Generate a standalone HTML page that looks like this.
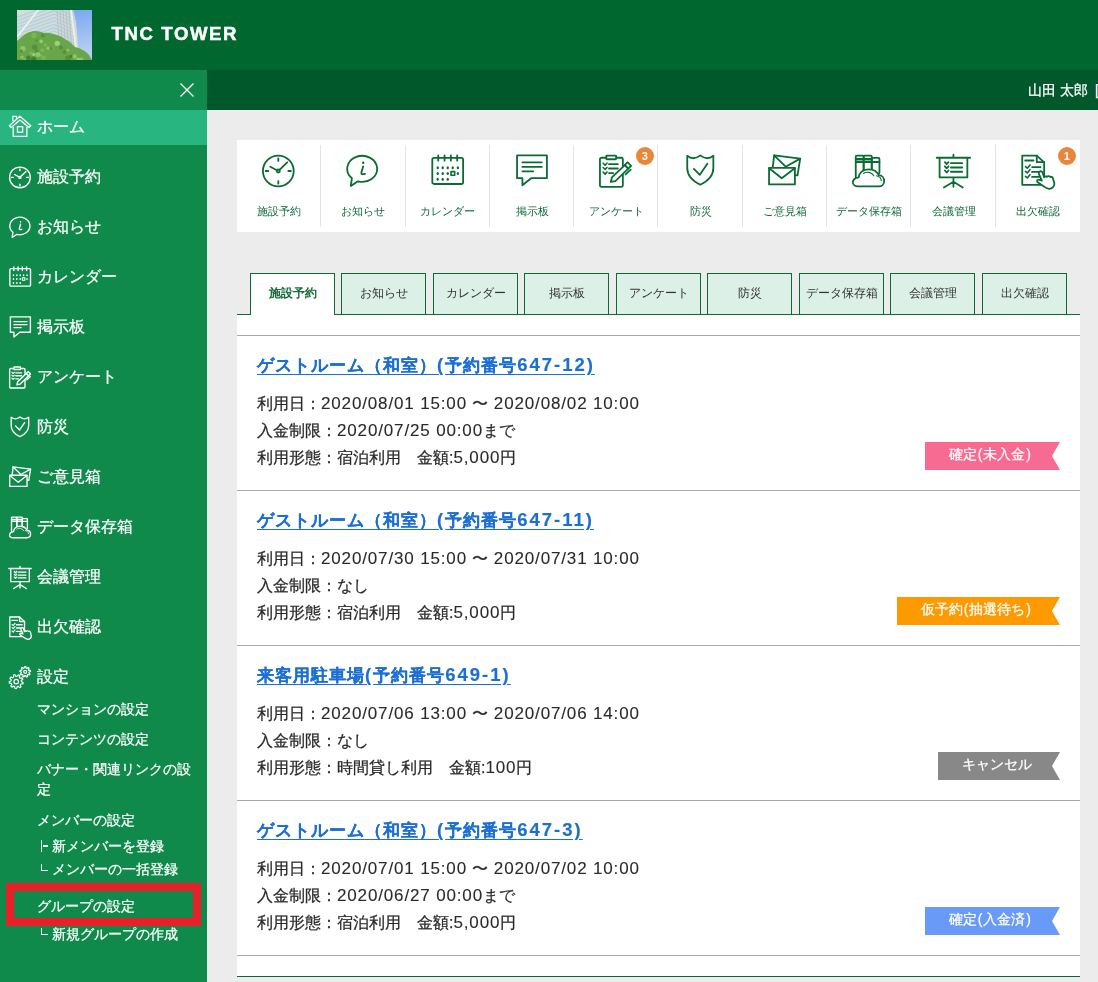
<!DOCTYPE html>
<html lang="ja"><head><meta charset="utf-8"><style>
*{margin:0;padding:0;box-sizing:border-box}
html,body{width:1098px;height:982px;overflow:hidden;background:#ececec;font-family:"Liberation Sans",sans-serif}
#wrap{position:absolute;left:0;top:0;width:1098px;height:982px;will-change:transform}
.mi,.si,.det,.rib,#user{-webkit-text-stroke:0.25px currentColor}
.ttl{-webkit-text-stroke:0.15px currentColor}
.abs{position:absolute}
#hdr{left:0;top:0;width:1098px;height:70px;background:#00672f}
#brand{left:111.5px;top:22px;color:#fff;font-weight:bold;font-size:18.6px;letter-spacing:1.6px;line-height:24px;-webkit-text-stroke:0.5px #fff}
#side{left:0;top:70px;width:207px;height:912px;background:#0f8a4a}
#topbar{left:207px;top:70px;width:891px;height:40px;background:#00582b}
#user{left:1028px;top:80px;color:#fff;font-size:14px;line-height:20px;white-space:nowrap}
#homehl{left:0;top:110px;width:207px;height:35px;background:#29b57f}
.mi{position:absolute;left:37px;color:#fff;font-size:16px;line-height:20px;white-space:nowrap}
.sic{position:absolute;left:9px;width:22.8px;height:22.8px;overflow:visible;color:#fff;fill:none;stroke:#fff;stroke-width:2;stroke-linecap:round;stroke-linejoin:round;--bg:#0f8a4a}
.tr{position:absolute;left:40.9px;width:1.8px;border-left:1.8px solid #fff}
.trh{position:absolute;left:42.7px;width:5px;height:1.8px;background:#fff}
.si{position:absolute;left:37px;color:#fff;font-size:14px;line-height:18px;white-space:nowrap}
#panel{left:237px;top:140px;width:843px;height:92px;background:#fff}
.pic{position:absolute;width:34px;height:34px;overflow:visible;color:#0b6b34;fill:none;stroke:#0b6b34;stroke-width:1.8;stroke-linecap:round;stroke-linejoin:round;--bg:#fff}
.plb{position:absolute;top:204px;width:100px;text-align:center;font-size:11px;line-height:15px;color:#106a36;white-space:nowrap}
.pdiv{position:absolute;top:145px;width:1px;height:82px;background:#e3e3e3}
.badge{position:absolute;width:18px;height:18px;border-radius:9px;background:#e8873a;color:#fff;font-size:11px;font-weight:bold;text-align:center;line-height:18px}
#list{left:237px;top:315px;width:843px;height:662px;background:#fff;border-bottom:1px solid #066a33}
#tabline{left:237px;top:314px;width:843px;height:1px;background:#0b6b34}
.tab{position:absolute;top:273px;width:85px;height:42px;background:#ddf0e7;border:1px solid #0b6b34;font-size:12px;color:#333;text-align:center;line-height:38px;white-space:nowrap}
.tab.on{background:#fff;border-bottom:none;color:#1a6b3b;font-weight:bold}
.sep{position:absolute;left:237px;width:843px;height:1px;background:#aaa}
.ttl{position:absolute;left:257px;color:#1d6fd2;font-size:17px;letter-spacing:1px;font-weight:bold;text-decoration:underline;line-height:22px;white-space:nowrap}
.det{position:absolute;left:257px;color:#2a2a2a;font-size:16px;line-height:27px;white-space:nowrap}
.det .n{font-size:17px;letter-spacing:0.85px;-webkit-text-stroke:0.1px currentColor}
.det .t{margin:0 1px}
.ttl .n{letter-spacing:2px;font-size:18.5px}
.ttl{text-underline-offset:3px}
.rib .p{margin:0 1px}
.rib{position:absolute;right:38px;height:28px;color:#fff;font-size:14px;line-height:25px;white-space:nowrap;padding-left:24px;padding-right:28px;clip-path:polygon(0 0,100% 0,calc(100% - 8px) 50%,100% 100%,0 100%)}
</style></head><body><div id="wrap">
<svg width="0" height="0" style="position:absolute"><symbol id="i-clock" viewBox="0 0 34 34" overflow="visible"><circle cx="16.3" cy="17" r="15.4"/>
<path d="M16.3 4.3v2.6M16.3 27.1v2.6M3.7 17h2.6M26.3 17h2.6" />
<circle cx="16.3" cy="17" r="1.5"/>
<path d="M14.9 16.2L8.3 12.7M17.5 15.8L25.2 8.3"/></symbol><symbol id="i-info" viewBox="0 0 34 34" overflow="visible"><path d="M5.9 24.3A15 13 0 1 1 11.9 27.3L4.8 32Z"/>
<circle cx="17.2" cy="8.7" r="1.2" fill="currentColor" stroke="none"/>
<path d="M17.2 12.3L15.4 18.6C15 20.2 16.2 20.6 19 19.8"/></symbol><symbol id="i-cal" viewBox="0 0 34 34" overflow="visible"><rect x="1.3" y="3.9" width="30.8" height="26.1" rx="1.8"/>
<path d="M7.25 1.3v5.4M13.55 1.3v5.4M19.85 1.3v5.4M26.2 1.3v5.4"/>
<ellipse cx="6.7" cy="13.75" rx="1.15" ry="1.5" fill="currentColor" stroke="none"/><ellipse cx="11.7" cy="13.75" rx="1.15" ry="1.5" fill="currentColor" stroke="none"/><ellipse cx="16.75" cy="13.75" rx="1.15" ry="1.5" fill="currentColor" stroke="none"/><ellipse cx="21.75" cy="13.75" rx="1.15" ry="1.5" fill="currentColor" stroke="none"/><ellipse cx="26.85" cy="13.75" rx="1.15" ry="1.5" fill="currentColor" stroke="none"/><ellipse cx="6.7" cy="19.45" rx="1.15" ry="1.5" fill="currentColor" stroke="none"/><ellipse cx="11.7" cy="19.45" rx="1.15" ry="1.5" fill="currentColor" stroke="none"/><ellipse cx="16.75" cy="19.45" rx="1.15" ry="1.5" fill="currentColor" stroke="none"/><ellipse cx="26.85" cy="19.45" rx="1.15" ry="1.5" fill="currentColor" stroke="none"/><ellipse cx="6.7" cy="25.2" rx="1.15" ry="1.5" fill="currentColor" stroke="none"/><ellipse cx="11.7" cy="25.2" rx="1.15" ry="1.5" fill="currentColor" stroke="none"/><ellipse cx="16.75" cy="25.2" rx="1.15" ry="1.5" fill="currentColor" stroke="none"/><rect x="20" y="17.6" width="3.7" height="3.7" style="stroke-width:1.6"/></symbol><symbol id="i-board" viewBox="0 0 34 34" overflow="visible"><path d="M2.05 1.4H31.9V24.2H16.15L7.4 31.3V24.2H2.05Z"/>
<path d="M7.4 8.35H26.8M7.4 12.9H26.8M7.4 17.3H18.2"/></symbol><symbol id="i-survey" viewBox="0 0 34 34" overflow="visible"><rect x="0.95" y="3.75" width="22.9" height="29.1" rx="1.5"/>
<rect x="7.3" y="1.55" width="9.8" height="3.7" rx="0.5" fill="var(--bg)"/>
<path d="M4.2 9.2L6.1 11.2L8 9.2" style="stroke-width:1.6"/><path d="M4.2 13.5L6.1 15.5L8 13.5" style="stroke-width:1.6"/><path d="M4.2 18.1L6.1 20.1L8 18.1" style="stroke-width:1.6"/><path d="M10 10.2H18.8M10 14.5H18.8M10 19.1H14.2"/>
<g transform="translate(11.4 28.4) rotate(-44)"><path d="M0.6 0L4.5 -2.5H22.4V2.5H4.5Z" fill="var(--bg)"/><path d="M22.4 -2.5H26.4V2.5H22.4Z" fill="var(--bg)"/><path d="M16.5 4.9H23.5"/></g></symbol><symbol id="i-shield" viewBox="0 0 34 34" overflow="visible"><path d="M3.25 1.8Q9.5 6.8 16.3 1.4Q23.1 6.8 29.35 1.8V14C29.35 22 23 27.5 16.3 30.7C9.6 27.5 3.25 22 3.25 14Z"/>
<path d="M9.9 14.85L15.85 20.8L23.35 9.7"/></symbol><symbol id="i-mail" viewBox="0 0 34 34" overflow="visible"><path d="M4.7 13.6L6.15 1.4L32.2 4.6L29.5 21.4L26.9 21.1"/>
<path d="M6.15 1.4L17.7 12.7L32.2 4.6"/>
<rect x="1.05" y="13.8" width="25.85" height="16.66" fill="var(--bg)"/>
<path d="M1.2 14.2L13.75 24.2L26.8 14.2"/></symbol><symbol id="i-cloud" viewBox="0 0 34 34" overflow="visible"><rect x="3.75" y="1.6" width="7.9" height="27" rx="1"/>
<rect x="11.65" y="1.6" width="8.1" height="18" rx="1"/>
<rect x="19.75" y="3.95" width="7.7" height="15.6" rx="1"/>
<rect x="3.75" y="5" width="16" height="3" fill="currentColor" stroke="none" opacity="0.45"/>
<path d="M3.75 5H19.75M3.75 8H27.45"/>
<path d="M6 32.4H26.8C30 32.4 32.2 30 32.2 27C32.2 24 30 21.4 26.8 21.2C25.2 17.6 21.2 15.3 16.3 15.3C10.8 15.3 7.2 19 6.7 23.3C3 24 0.8 26.2 0.8 28.2C0.8 30.8 3.2 32.4 6 32.4Z" fill="var(--bg)"/>
<path d="M11.5 19.5C14 17.5 19.5 17.8 21.8 21.8M24.3 21.8C27 22.3 29 24 29.3 26.6" style="stroke-width:1.1"/></symbol><symbol id="i-pres" viewBox="0 0 34 34" overflow="visible"><path d="M-0.3 3.75H33.1M16.45 0.7V3.75M2.6 3.75V23.4H30.35V3.75M16.45 23.4V32.8M16.45 27.7L6.9 33.6M16.45 27.7L25.8 33.6"/>
<path d="M7.9 8.2L9.7 10.2L11.5 8.2" style="stroke-width:1.8"/><path d="M7.9 12.3L9.7 14.3L11.5 12.3" style="stroke-width:1.8"/><path d="M7.9 16.5L9.7 18.5L11.5 16.5" style="stroke-width:1.8"/><path d="M13.9 9.2H25.2M13.9 13.5H25.2M13.9 17.75H25.2"/></symbol><symbol id="i-attend" viewBox="0 0 34 34" overflow="visible"><path d="M1.25 1.55H15.75L23.15 8.36V30.86H1.25Z"/>
<path d="M15.75 1.55V8.2H23.15"/>
<path d="M4.2 6.5H12.5"/><path d="M4.5 12.6L6.3 14.2L9 10.9" style="stroke-width:1.6"/><path d="M4.5 17.3L6.3 18.900000000000002L9 15.600000000000001" style="stroke-width:1.6"/><path d="M4.5 22.4L6.3 24.0L9 20.7" style="stroke-width:1.6"/><path d="M11.05 13.1H19.6M11.05 17.95H19.6M11.05 22.9H19.6"/>
<path d="M18.6 17.8C19.8 16.8 21.2 17.3 21.6 18.6L23 23.3C23.5 22.2 25 22 25.8 22.8C26.5 22 28.5 22 29.5 23C30.5 22.5 31.5 23 31.8 24L33.3 29C34 32 31 35 28 34.8C26 34.7 24.5 33.5 23 32.5L17.4 28.8C15 27.5 16 25 18.5 25.8L20.8 26.6L17.8 19.7C17.6 19 17.9 18.3 18.6 17.8Z" fill="var(--bg)"/></symbol></svg>
<div id="hdr" class="abs"></div>
<svg class="abs" style="left:17px;top:10px;width:75px;height:50px" viewBox="0 0 75 50">
<defs><linearGradient id="sky" x1="0" y1="0" x2="0.3" y2="1"><stop offset="0" stop-color="#6a9ff2"/><stop offset="1" stop-color="#b4cdf2"/></linearGradient>
<clipPath id="bc"><path d="M0 0H56L59 12L62 46H0Z"/></clipPath><clipPath id="pc"><rect width="75" height="50"/></clipPath></defs>
<g clip-path="url(#pc)">
<rect width="75" height="50" fill="url(#sky)"/>
<path d="M0 0H56L59 12L62 46H0Z" fill="#d9dad5"/>
<g clip-path="url(#bc)"><path d="M-2 8.0L37 -6.0L58 3.0" stroke="#a9d3e8" stroke-width="1.3" fill="none"/><path d="M-2 11.4L37 -2.6L58 6.4" stroke="#a9d3e8" stroke-width="1.3" fill="none"/><path d="M-2 14.8L37 0.8L58 9.8" stroke="#a9d3e8" stroke-width="1.3" fill="none"/><path d="M-2 18.2L37 4.2L58 13.2" stroke="#a9d3e8" stroke-width="1.3" fill="none"/><path d="M-2 21.6L37 7.6L58 16.6" stroke="#a9d3e8" stroke-width="1.3" fill="none"/><path d="M-2 25.0L37 11.0L58 20.0" stroke="#a9d3e8" stroke-width="1.3" fill="none"/><path d="M-2 28.4L37 14.4L58 23.4" stroke="#a9d3e8" stroke-width="1.3" fill="none"/><path d="M-2 31.8L37 17.8L58 26.8" stroke="#a9d3e8" stroke-width="1.3" fill="none"/><path d="M-2 35.2L37 21.2L58 30.2" stroke="#a9d3e8" stroke-width="1.3" fill="none"/><path d="M-2 38.6L37 24.6L58 33.6" stroke="#a9d3e8" stroke-width="1.3" fill="none"/><path d="M-2 42.0L37 28.0L58 37.0" stroke="#a9d3e8" stroke-width="1.3" fill="none"/><path d="M-2 45.4L37 31.4L58 40.4" stroke="#a9d3e8" stroke-width="1.3" fill="none"/><path d="M-2 48.8L37 34.8L58 43.8" stroke="#a9d3e8" stroke-width="1.3" fill="none"/><path d="M-2 52.2L37 38.2L58 47.2" stroke="#a9d3e8" stroke-width="1.3" fill="none"/><path d="M-2 55.6L37 41.6L58 50.6" stroke="#a9d3e8" stroke-width="1.3" fill="none"/><path d="M-2 59.0L37 45.0L58 54.0" stroke="#a9d3e8" stroke-width="1.3" fill="none"/><path d="M40 0L43 46" stroke="#b7bab4" stroke-width="0.8"/><path d="M43 0L46 46" stroke="#b7bab4" stroke-width="0.8"/><path d="M46 0L49 46" stroke="#b7bab4" stroke-width="0.8"/><path d="M49 0L52 46" stroke="#b7bab4" stroke-width="0.8"/><path d="M52 0L55 46" stroke="#b7bab4" stroke-width="0.8"/><path d="M55 0L58 46" stroke="#b7bab4" stroke-width="0.8"/><path d="M0 27L22 -1" stroke="#f6f6f2" stroke-width="1.4"/><path d="M54 0L60 46" stroke="#eeeeea" stroke-width="2"/></g>
<path d="M0 31C4 28 8 23 13 22C17 20 23 21 27 23C31 22 36 24 40 25C44 26 47 28 49 30C53 31 56 35 58 37C63 38 69 41 72 45L75 50H0Z" fill="#68a64a"/>
<circle cx="17.8" cy="37.2" r="2.7" fill="#4f8c36" opacity="0.8"/><circle cx="35.6" cy="38.3" r="1.2" fill="#7fba58" opacity="0.8"/><circle cx="17.6" cy="49.9" r="2.1" fill="#3f7a2c" opacity="0.8"/><circle cx="41.2" cy="33.1" r="1.6" fill="#a6d47a" opacity="0.8"/><circle cx="11.4" cy="47.9" r="2.4" fill="#3f7a2c" opacity="0.8"/><circle cx="53.9" cy="46.6" r="1.8" fill="#3f7a2c" opacity="0.8"/><circle cx="16.3" cy="49.0" r="2.4" fill="#3f7a2c" opacity="0.8"/><circle cx="40.1" cy="33.4" r="2.6" fill="#a6d47a" opacity="0.8"/><circle cx="51.1" cy="48.0" r="2.8" fill="#4f8c36" opacity="0.8"/><circle cx="64.5" cy="49.0" r="2.1" fill="#7fba58" opacity="0.8"/><circle cx="64.0" cy="49.7" r="1.8" fill="#9ccc6e" opacity="0.8"/><circle cx="5.0" cy="47.1" r="1.7" fill="#9ccc6e" opacity="0.8"/><circle cx="57.7" cy="46.4" r="2.2" fill="#9ccc6e" opacity="0.8"/><circle cx="44.0" cy="37.4" r="2.0" fill="#4f8c36" opacity="0.8"/><circle cx="5.8" cy="38.8" r="2.7" fill="#9ccc6e" opacity="0.8"/><circle cx="19.8" cy="41.3" r="1.7" fill="#4f8c36" opacity="0.8"/><circle cx="28.3" cy="34.9" r="1.8" fill="#7fba58" opacity="0.8"/><circle cx="7.7" cy="49.2" r="1.6" fill="#7fba58" opacity="0.8"/><circle cx="47.6" cy="42.0" r="1.9" fill="#4f8c36" opacity="0.8"/><circle cx="19.4" cy="30.5" r="1.2" fill="#4f8c36" opacity="0.8"/><circle cx="31.1" cy="38.2" r="1.8" fill="#9ccc6e" opacity="0.8"/><circle cx="26.5" cy="47.7" r="2.3" fill="#7fba58" opacity="0.8"/><circle cx="4.5" cy="40.9" r="1.6" fill="#4f8c36" opacity="0.8"/><circle cx="34.2" cy="38.6" r="1.5" fill="#4f8c36" opacity="0.8"/><circle cx="13.9" cy="43.2" r="1.6" fill="#7fba58" opacity="0.8"/><circle cx="61.0" cy="49.2" r="1.7" fill="#a6d47a" opacity="0.8"/><circle cx="16.7" cy="44.5" r="1.7" fill="#a6d47a" opacity="0.8"/><circle cx="50.9" cy="40.2" r="1.4" fill="#9ccc6e" opacity="0.8"/><circle cx="24.1" cy="31.3" r="1.9" fill="#a6d47a" opacity="0.8"/><circle cx="25.3" cy="40.2" r="1.9" fill="#7fba58" opacity="0.8"/><circle cx="16.9" cy="25.4" r="2.7" fill="#7fba58" opacity="0.8"/><circle cx="23.6" cy="45.4" r="1.5" fill="#7fba58" opacity="0.8"/><circle cx="20.9" cy="44.6" r="2.5" fill="#9ccc6e" opacity="0.8"/><circle cx="25.9" cy="25.6" r="2.0" fill="#4f8c36" opacity="0.8"/>
</g></svg>
<div id="brand" class="abs">TNC TOWER</div>
<div id="side" class="abs"></div>
<div id="homehl" class="abs"></div>
<svg class="abs" style="left:180px;top:83px;width:14px;height:14px" viewBox="0 0 14 14"><path d="M0.5 0.5L13.5 13.5M13.5 0.5L0.5 13.5" stroke="#fff" stroke-width="1.3"/></svg>
<div id="topbar" class="abs"></div>
<div id="user" class="abs">山田 太郎<span style="margin-left:7px">[</span></div>
<div class="mi" style="top:117px">ホーム</div><div class="mi" style="top:167px">施設予約</div><svg class="sic" style="top:165.6px"><use href="#i-clock"/></svg><div class="mi" style="top:217px">お知らせ</div><svg class="sic" style="top:215.6px"><use href="#i-info"/></svg><div class="mi" style="top:267px">カレンダー</div><svg class="sic" style="top:265.6px"><use href="#i-cal"/></svg><div class="mi" style="top:317px">掲示板</div><svg class="sic" style="top:315.6px"><use href="#i-board"/></svg><div class="mi" style="top:367px">アンケート</div><svg class="sic" style="top:365.6px"><use href="#i-survey"/></svg><div class="mi" style="top:417px">防災</div><svg class="sic" style="top:415.6px"><use href="#i-shield"/></svg><div class="mi" style="top:467px">ご意見箱</div><svg class="sic" style="top:465.6px"><use href="#i-mail"/></svg><div class="mi" style="top:517px">データ保存箱</div><svg class="sic" style="top:515.6px"><use href="#i-cloud"/></svg><div class="mi" style="top:567px">会議管理</div><svg class="sic" style="top:565.6px"><use href="#i-pres"/></svg><div class="mi" style="top:617px">出欠確認</div><svg class="sic" style="top:615.6px"><use href="#i-attend"/></svg><div class="mi" style="top:667px">設定</div><svg class="abs" style="left:4px;top:112px;width:32px;height:30px;overflow:visible" viewBox="0 0 32 30" fill="none" stroke="#fff" stroke-width="1.25">
<path d="M5.35 13.75L15.9 4.28L26.74 13.75L25.06 15.6L15.9 7.95L7.03 15.6Z" stroke-linejoin="round"/>
<path d="M8.86 9.3V4.4H12.53V6.6"/>
<path d="M9.17 14.7V24.45H22.9V14.7"/>
<rect x="13.45" y="14.7" width="5.2" height="5.5"/></svg><svg class="abs" style="left:4px;top:662px;width:32px;height:30px;overflow:visible" viewBox="0 0 32 30" fill="none" stroke="#fff" stroke-width="1.2" stroke-linejoin="round">
<path d="M17.40 19.60 L19.14 20.48 L18.78 21.99 L16.82 21.98 L16.18 22.94 L16.96 24.74 L15.70 25.66 L14.22 24.39 L13.10 24.72 L12.54 26.59 L10.98 26.49 L10.66 24.57 L9.60 24.10 L7.97 25.18 L6.84 24.10 L7.83 22.42 L7.31 21.38 L5.37 21.15 L5.20 19.60 L7.04 18.95 L7.31 17.82 L5.97 16.40 L6.84 15.10 L8.67 15.78 L9.60 15.10 L9.49 13.15 L10.98 12.71 L11.95 14.41 L13.10 14.48 L14.27 12.91 L15.70 13.54 L15.34 15.46 L16.18 16.26 L18.08 15.81 L18.78 17.21 L17.27 18.45 Z"/><circle cx="12.2" cy="19.6" r="2.3"/>
<path d="M24.93 10.95 L26.03 11.99 L25.42 13.00 L23.99 12.53 L23.31 13.08 L23.49 14.58 L22.38 14.97 L21.58 13.68 L20.71 13.67 L19.88 14.93 L18.78 14.51 L19.00 13.02 L18.34 12.45 L16.89 12.89 L16.31 11.85 L17.44 10.85 L17.30 9.99 L15.92 9.39 L16.14 8.23 L17.65 8.19 L18.09 7.44 L17.41 6.09 L18.33 5.35 L19.51 6.28 L20.34 6.00 L20.68 4.53 L21.86 4.54 L22.17 6.02 L22.98 6.33 L24.19 5.43 L25.09 6.20 L24.37 7.53 L24.79 8.29 L26.30 8.37 L26.49 9.54 L25.09 10.10 Z"/><circle cx="21.2" cy="9.8" r="1.5"/></svg><div class="si" style="top:700px">マンションの設定</div><div class="si" style="top:730px">コンテンツの設定</div><div class="si" style="top:811px">メンバーの設定</div><div class="si" style="top:897px">グループの設定</div><div class="si" style="top:837px;left:51.5px">新メンバーを登録</div><div class="si" style="top:860px;left:52px">メンバーの一括登録</div><div class="si" style="top:925px;left:52px">新規グループの作成</div><div class="tr" style="top:840px;height:12px"></div><div class="trh" style="top:844.8px"></div><div class="tr" style="top:864px;height:6.8px;border-bottom:1.8px solid #fff;width:7px"></div><div class="tr" style="top:928px;height:6.8px;border-bottom:1.8px solid #fff;width:7px"></div><div class="si" style="top:759px;line-height:20px">バナー・関連リンクの設<br>定</div>
<div class="abs" style="left:6px;top:883px;width:195px;height:43px;border:8px solid #e8202a"></div>
<div id="panel" class="abs"></div><svg class="pic" style="left:262.15px;top:154.4px"><use href="#i-clock"/></svg><div class="plb" style="left:229.15px">施設予約</div><svg class="pic" style="left:346.45px;top:154.4px"><use href="#i-info"/></svg><div class="plb" style="left:313.45px">お知らせ</div><div class="pdiv" style="left:320px"></div><svg class="pic" style="left:430.75px;top:154.4px"><use href="#i-cal"/></svg><div class="plb" style="left:397.75px">カレンダー</div><div class="pdiv" style="left:405px"></div><svg class="pic" style="left:515.05px;top:154.4px"><use href="#i-board"/></svg><div class="plb" style="left:482.05px">掲示板</div><div class="pdiv" style="left:489px"></div><svg class="pic" style="left:599.35px;top:154.4px"><use href="#i-survey"/></svg><div class="plb" style="left:566.35px">アンケート</div><div class="pdiv" style="left:573px"></div><svg class="pic" style="left:683.65px;top:154.4px"><use href="#i-shield"/></svg><div class="plb" style="left:650.65px">防災</div><div class="pdiv" style="left:657px"></div><svg class="pic" style="left:767.95px;top:154.4px"><use href="#i-mail"/></svg><div class="plb" style="left:734.95px">ご意見箱</div><div class="pdiv" style="left:742px"></div><svg class="pic" style="left:852.25px;top:154.4px"><use href="#i-cloud"/></svg><div class="plb" style="left:819.25px">データ保存箱</div><div class="pdiv" style="left:826px"></div><svg class="pic" style="left:936.55px;top:154.4px"><use href="#i-pres"/></svg><div class="plb" style="left:903.55px">会議管理</div><div class="pdiv" style="left:910px"></div><svg class="pic" style="left:1020.85px;top:154.4px"><use href="#i-attend"/></svg><div class="plb" style="left:987.85px">出欠確認</div><div class="pdiv" style="left:995px"></div><div class="badge" style="left:635.8px;top:147px">3</div><div class="badge" style="left:1057.8px;top:147px">1</div>
<div id="list" class="abs"></div>
<div id="tabline" class="abs"></div>
<div class="tab on" style="left:250px">施設予約</div><div class="tab" style="left:341px">お知らせ</div><div class="tab" style="left:433px">カレンダー</div><div class="tab" style="left:524px">掲示板</div><div class="tab" style="left:616px">アンケート</div><div class="tab" style="left:707px">防災</div><div class="tab" style="left:799px">データ保存箱</div><div class="tab" style="left:890px">会議管理</div><div class="tab" style="left:982px">出欠確認</div>
<div class="sep" style="top:335px"></div><div class="ttl" style="top:354px">ゲストルーム（和室）<span class="n">(</span>予約番号<span class="n">647-12)</span></div><div class="det" style="top:390px">利用日：<span class="n">2020/08/01 15:00</span> <span class="t">〜</span> <span class="n">2020/08/02 10:00</span><br>入金制限：<span class="n">2020/07/25 00:00</span>まで<br>利用形態：宿泊利用　金額:<span class="n">5,000</span>円</div><div class="rib" style="top:442px;background:#f76a92">確定<span class=p>(</span>未入金<span class=p>)</span></div><div class="sep" style="top:490px"></div><div class="ttl" style="top:509px">ゲストルーム（和室）<span class="n">(</span>予約番号<span class="n">647-11)</span></div><div class="det" style="top:545px">利用日：<span class="n">2020/07/30 15:00</span> <span class="t">〜</span> <span class="n">2020/07/31 10:00</span><br>入金制限：なし<br>利用形態：宿泊利用　金額:<span class="n">5,000</span>円</div><div class="rib" style="top:597px;background:#fd9a00">仮予約<span class=p>(</span>抽選待ち<span class=p>)</span></div><div class="sep" style="top:645px"></div><div class="ttl" style="top:664px">来客用駐車場<span class="n">(</span>予約番号<span class="n">649-1)</span></div><div class="det" style="top:700px">利用日：<span class="n">2020/07/06 13:00</span> <span class="t">〜</span> <span class="n">2020/07/06 14:00</span><br>入金制限：なし<br>利用形態：時間貸し利用　金額:<span class="n">100</span>円</div><div class="rib" style="top:752px;background:#888888">キャンセル</div><div class="sep" style="top:800px"></div><div class="ttl" style="top:819px">ゲストルーム（和室）<span class="n">(</span>予約番号<span class="n">647-3)</span></div><div class="det" style="top:855px">利用日：<span class="n">2020/07/01 15:00</span> <span class="t">〜</span> <span class="n">2020/07/02 10:00</span><br>入金制限：<span class="n">2020/06/27 00:00</span>まで<br>利用形態：宿泊利用　金額:<span class="n">5,000</span>円</div><div class="rib" style="top:907px;background:#6a9af8">確定<span class=p>(</span>入金済<span class=p>)</span></div><div class="sep" style="top:955px"></div>
</div></body></html>
